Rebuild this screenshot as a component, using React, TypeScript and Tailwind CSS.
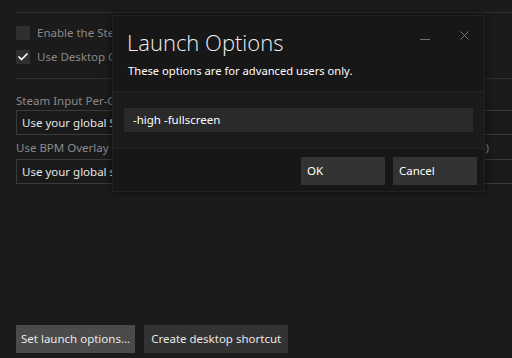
import { Check, X } from 'lucide-react'

function CheckRow({ label, checked }: { label: string; checked?: boolean }) {
  return (
    <div className="flex items-center gap-[7px] h-[24px]">
      <div className="w-[14px] h-[14px] bg-[#2f2f2f] flex items-center justify-center">
        {checked && <Check className="w-[12px] h-[12px] text-white" strokeWidth={3.5} />}
      </div>
      <span className="text-[11.5px] text-[#8a8a8a] whitespace-nowrap">{label}</span>
    </div>
  )
}

function SelectBox({ value }: { value: string }) {
  return (
    <div className="h-[25px] border border-[#3a3a3a] bg-[#1a1a1a] flex items-center px-[5px] w-[520px]">
      <span className="text-[11.5px] text-[#e6e6e6] whitespace-nowrap">{value}</span>
    </div>
  )
}

export default function App() {
  return (
    <div
      className="relative w-[512px] h-[358px] overflow-hidden bg-[#1b1b1b]"
      style={{ fontFamily: '"Noto Sans", "Open Sans", sans-serif' }}
    >
      <div className="pl-[16px] pt-[12px] flex flex-col">
        <div className="h-px bg-[#2e2e2e] w-[520px]" />
        <div className="pt-[8px] pb-[8px] flex flex-col">
          <CheckRow label="Enable the Steam Overlay while in-game" />
          <CheckRow label="Use Desktop Game Theatre while SteamVR is active" checked />
        </div>
        <div className="h-px bg-[#2e2e2e] w-[520px] mt-[1px]" />
        <div className="pt-[13px] flex flex-col">
          <span className="text-[11.5px] text-[#8a8a8a] h-[18px] leading-[18px] whitespace-nowrap">
            Steam Input Per-Game Setting (requires restart of game)
          </span>
          <SelectBox value="Use your global Steam Input settings" />
          <div className="flex justify-between w-[473px] text-[11.5px] text-[#8a8a8a] h-[23px] leading-[23px] mt-[1px] whitespace-nowrap">
            <span>Use BPM Overlay when Steam Input is active</span>
            <span>(requires restart of game)</span>
          </div>
          <SelectBox value="Use your global setting" />
        </div>
        <div className="flex gap-[9px] mt-[141px]">
          <button className="h-[28px] px-[5px] bg-[#4b4b4b] text-[11.5px] text-[#e8e8e8]">
            Set launch options...
          </button>
          <button className="h-[28px] px-[7px] bg-[#333333] text-[11.5px] text-[#e8e8e8]">
            Create desktop shortcut
          </button>
        </div>
      </div>

      {/* Dialog */}
      <div className="absolute left-[112px] top-[15px] w-[373px] border border-[#222222] bg-[#171717] shadow-[0_0_8px_rgba(0,0,0,0.6)] flex flex-col">
        <div className="relative px-[14px] pt-[11px] h-[75px]">
          <div
            className="text-[22px] font-light text-[#f0f0f0] leading-[30px]"
            style={{ fontFamily: '"Open Sans", "Noto Sans", sans-serif' }}
          >
            Launch Options
          </div>
          <div className="text-[11.2px] text-white mt-[6px] ml-[1px]">These options are for advanced users only.</div>
          <div className="absolute left-[307px] top-[23px] w-[10px] h-px bg-[#6e6e6e]" />
          <X className="absolute left-[344px] top-[12px] w-[15px] h-[15px] text-[#7a7a7a]" strokeWidth={1.5} />
        </div>
        <div className="bg-[#1b1b1b] border-t border-b border-[#222222] px-[11px] pt-[16px] pb-[16px]">
          <div className="h-[24px] bg-[#2a2a2a] flex items-center px-[9px] text-[11.5px] text-white">
            -high -fullscreen
          </div>
        </div>
        <div className="flex justify-end gap-[8px] pr-[7px] pt-[8px] pb-[6px]">
          <button className="w-[84px] h-[28px] bg-[#333333] text-left px-[6px] text-[11.5px] text-white">OK</button>
          <button className="w-[84px] h-[28px] bg-[#333333] text-left px-[6px] text-[11.5px] text-white">Cancel</button>
        </div>
      </div>
    </div>
  )
}
